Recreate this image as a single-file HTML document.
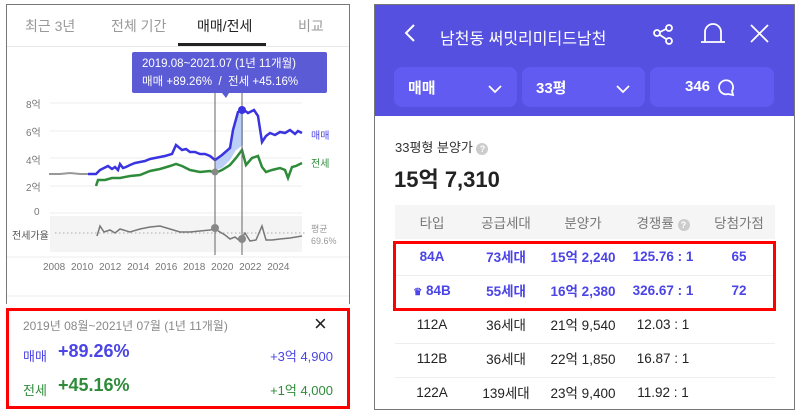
<!DOCTYPE html><html><head><meta charset="utf-8"><style>
*{margin:0;padding:0;box-sizing:border-box}
body{width:799px;height:416px;background:#fff;font-family:"Liberation Sans","Noto Sans CJK KR",sans-serif;position:relative;overflow:hidden}
.a{position:absolute;white-space:nowrap}
</style></head><body>
<div class="a" style="left:6px;top:4px;width:344px;height:300px;border:1px solid #777;border-bottom:none"></div>
<div class="a" style="left:7px;top:46px;width:342px;height:1px;background:#e8e8e8"></div>
<div class="a" style="left:25px;top:16px;font-size:14px;color:#999">최근 3년</div>
<div class="a" style="left:111px;top:16px;font-size:14px;color:#999">전체 기간</div>
<div class="a" style="left:197px;top:16px;font-size:14px;color:#222">매매/전세</div>
<div class="a" style="left:298px;top:16px;font-size:14px;color:#999">비교</div>
<div class="a" style="left:178px;top:43px;width:88px;height:3px;background:#222"></div>
<svg class="a" style="left:0;top:0" width="360" height="300">
<g stroke="#eee" stroke-width="1"><line x1="50" y1="103" x2="302" y2="103"/><line x1="50" y1="131" x2="302" y2="131"/><line x1="50" y1="158" x2="302" y2="158"/><line x1="50" y1="186" x2="302" y2="186"/><line x1="50" y1="213" x2="302" y2="213"/></g>
<rect x="50" y="216" width="252" height="36" fill="#f4f4f4"/>
<line x1="55" y1="233" x2="305" y2="233" stroke="#aaa" stroke-dasharray="1.5 2.5"/>
<polygon points="215,160 222,155 230,148 233,130 238,115 243,110 243,145 236,150 230,160 222,168 215,170" fill="#bcd0f7"/>
<polyline fill="none" stroke="#999" stroke-width="2" points="49,174 60,174 70,173 80,174 88,174"/>
<polyline fill="none" stroke="#3a33e0" stroke-width="2.5" points="88,174 96,174 100,170 104,168 108,166 112,169 115,167 118,170 120,164 123,168 126,167 130,165 135,163 140,162 145,161 150,159 155,158 160,157 165,156 172,154 176,145 182,150 186,149 190,152 195,152 200,154 205,154 210,156 215,160 222,155 230,148 233,130 238,112 244,110 248,113 254,110 258,116 262,142 266,136 270,133 275,135 280,132 285,133 290,130 295,134 298,131 302,133"/>
<polyline fill="none" stroke="#2e8b3a" stroke-width="2.5" points="96,186 98,180 105,180 112,178 120,178 130,176 140,175 150,171 160,169 170,166 176,164 182,166 190,170 200,172 210,171 215,173 222,170 230,165 236,158 242,150 246,165 252,158 258,156 262,167 266,172 272,170 280,168 285,170 288,178 292,167 296,166 302,163"/>
<polyline fill="none" stroke="#777" stroke-width="1.5" points="97,236 100,226 104,232 110,230 115,233 120,229 130,232 140,229 150,227 160,226 170,229 180,232 190,232 200,231 210,230 215,229 220,232 225,235 230,239 235,237 240,241 245,233 250,241 256,240 262,226 266,240 272,240 280,239 290,238 302,236"/>
<line x1="215" y1="93" x2="215" y2="255" stroke="#666"/><line x1="242" y1="93" x2="242" y2="255" stroke="#666"/>
<circle cx="215" cy="172" r="3.5" fill="#888"/><circle cx="215" cy="228" r="4" fill="#888"/><circle cx="242" cy="239" r="4" fill="#888"/><circle cx="242" cy="110" r="4" fill="#3a33e0"/>
<polygon points="222,93 229,93 226,98" fill="#5b5bd6"/>
<line x1="7" y1="257" x2="349" y2="257" stroke="#eee"/>
<line x1="7" y1="296" x2="349" y2="296" stroke="#eee"/>
</svg>
<div class="a" style="left:132px;top:52px;width:195px;height:41px;background:#5b5bd6;border-radius:2px;color:#fff;font-size:11.5px;line-height:18px;padding:3px 10px">2019.08~2021.07 (1년 11개월)<br>매매 +89.26% &nbsp;/ &nbsp;전세 +45.16%</div>
<div class="a" style="left:26px;top:96px;font-size:10px;color:#777">8억</div>
<div class="a" style="left:26px;top:124px;font-size:10px;color:#777">6억</div>
<div class="a" style="left:26px;top:152px;font-size:10px;color:#777">4억</div>
<div class="a" style="left:26px;top:179px;font-size:10px;color:#777">2억</div>
<div class="a" style="left:34px;top:207px;font-size:10px;color:#777">0</div>
<div class="a" style="left:12px;top:227px;font-size:10px;color:#555">전세가율</div>
<div class="a" style="left:311px;top:127px;font-size:10px;color:#4b44e6">매매</div>
<div class="a" style="left:311px;top:155px;font-size:10px;color:#2e8b3a">전세</div>
<div class="a" style="left:311px;top:223px;font-size:9px;color:#999;line-height:12px">평균<br>69.6%</div>
<div class="a" style="left:43px;top:262px;font-size:10px;color:#777;word-spacing:3px">2008 2010 2012 2014 2016 2018 2020 2022 2024</div>
<div class="a" style="left:6px;top:308px;width:344px;height:101px;border:3px solid #f00"></div>
<div class="a" style="left:23px;top:317px;font-size:12px;color:#888">2019년 08월~2021년 07월 (1년 11개월)</div>
<div class="a" style="left:314px;top:311px;font-size:22px;color:#222">×</div>
<div class="a" style="left:23px;top:346px;font-size:13px;color:#4b44e6">매매</div>
<div class="a" style="left:58px;top:341px;font-size:18px;font-weight:bold;color:#4b44e6">+89.26%</div>
<div class="a" style="right:466px;top:346px;font-size:13px;color:#4b44e6">+3억 4,900</div>
<div class="a" style="left:23px;top:380px;font-size:13px;color:#2e8b3a">전세</div>
<div class="a" style="left:58px;top:375px;font-size:18px;font-weight:bold;color:#2e8b3a">+45.16%</div>
<div class="a" style="right:466px;top:380px;font-size:13px;color:#2e8b3a">+1억 4,000</div>
<div class="a" style="left:374px;top:4px;width:421px;height:406px;border:1px solid #777;overflow:hidden">
<div class="a" style="left:0;top:0;width:421px;height:111px;background:#5650e0"></div>
<svg class="a" style="left:0;top:0" width="421" height="60"><polyline points="39,20 31,28 39,36" fill="none" stroke="#fff" stroke-width="2"/>
<g fill="none" stroke="#fff" stroke-width="1.8"><circle cx="294" cy="23" r="3"/><circle cx="282" cy="28" r="3"/><circle cx="294" cy="36" r="3"/><line x1="285" y1="27" x2="291" y2="24"/><line x1="285" y1="30" x2="291" y2="34"/>
<path d="M330,37 L330,27 a8,8 0 0 1 16,0 L346,37 Z M326,37 L350,37"/>
<line x1="376" y1="20" x2="393" y2="37"/><line x1="393" y1="20" x2="376" y2="37"/></g></svg>
<div class="a" style="left:65px;top:20px;font-size:16px;color:#fff">남천동 써밋리미티드남천</div>
<div class="a" style="left:19px;top:62px;width:123px;height:40px;background:#615bf2;border-radius:8px"></div>
<div class="a" style="left:147px;top:62px;width:123px;height:40px;background:#615bf2;border-radius:8px"></div>
<div class="a" style="left:275px;top:62px;width:124px;height:40px;background:#615bf2;border-radius:8px"></div>
<div class="a" style="left:33px;top:72px;font-size:15px;font-weight:bold;color:#fff">매매</div>
<div class="a" style="left:161px;top:72px;font-size:15px;font-weight:bold;color:#fff">33평</div>
<div class="a" style="left:310px;top:73px;font-size:15px;font-weight:bold;color:#fff">346</div>
<svg class="a" style="left:0;top:60px" width="421" height="40"><g fill="none" stroke="#fff" stroke-width="1.8"><polyline points="114,21 120,27 126,21"/><polyline points="242,21 248,27 254,21"/><path d="M353,29 a7,7 0 1 1 4,-3 l1,4 z"/></g></svg>
<div class="a" style="left:20px;top:132px;font-size:13px;color:#333">33평형 분양가 <span style="display:inline-block;width:12px;height:12px;border-radius:6px;background:#ccc;color:#fff;font-size:9px;text-align:center;line-height:12px;font-weight:bold">?</span></div>
<div class="a" style="left:19px;top:157px;font-size:22px;font-weight:bold;color:#222">15억 7,310</div>
<div class="a" style="left:20px;top:200px;width:380px;height:34px;background:#f5f5f5"></div>
<div class="a" style="left:20px;top:270px;width:380px;height:1px;background:#eee"></div>
<div class="a" style="left:20px;top:304px;width:380px;height:1px;background:#eee"></div>
<div class="a" style="left:20px;top:338px;width:380px;height:1px;background:#eee"></div>
<div class="a" style="left:20px;top:372px;width:380px;height:1px;background:#eee"></div>
<div class="a" style="left:18px;top:236px;width:383px;height:70px;border:3px solid #f00"></div>
<table class="a" style="left:20px;top:200px;width:380px;border-collapse:collapse;font-size:13.5px;text-align:center">
<tr style="height:34px;color:#777"><td style="width:74px">타입</td><td style="width:74px">공급세대</td><td style="width:80px">분양가</td><td style="width:80px">경쟁률 <span style="display:inline-block;width:12px;height:12px;border-radius:6px;background:#ccc;color:#fff;font-size:9px;line-height:12px;font-weight:bold">?</span></td><td>당첨가점</td></tr>
<tr style="height:34px;color:#4b44e6;font-weight:bold"><td>84A</td><td>73세대</td><td>15억 2,240</td><td>125.76 : 1</td><td>65</td></tr>
<tr style="height:34px;color:#4b44e6;font-weight:bold"><td><span style="font-size:10px">♛</span> 84B</td><td>55세대</td><td>16억 2,380</td><td>326.67 : 1</td><td>72</td></tr>
<tr style="height:34px;color:#222"><td>112A</td><td>36세대</td><td>21억 9,540</td><td>12.03 : 1</td><td></td></tr>
<tr style="height:34px;color:#222"><td>112B</td><td>36세대</td><td>22억 1,850</td><td>16.87 : 1</td><td></td></tr>
<tr style="height:34px;color:#222"><td>122A</td><td>139세대</td><td>23억 9,400</td><td>11.92 : 1</td><td></td></tr>
</table>
</div>
</body></html>
